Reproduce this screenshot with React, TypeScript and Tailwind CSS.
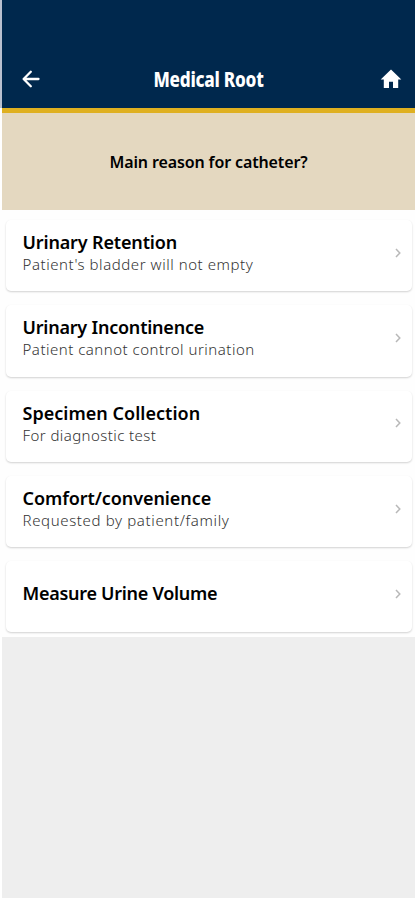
type Reason = { title: string; detail?: string; titleClass: string; detailClass?: string };

const reasons: Reason[] = [
  { title: 'Urinary Retention', detail: "Patient's bladder will not empty", titleClass: 'tracking-[-0.150px]', detailClass: 'tracking-[0.550px]' },
  { title: 'Urinary Incontinence', detail: 'Patient cannot control urination', titleClass: 'tracking-[-0.220px]', detailClass: 'tracking-[0.500px]' },
  { title: 'Specimen Collection', detail: 'For diagnostic test', titleClass: 'tracking-[0.030px]', detailClass: 'tracking-[0.420px]' },
  { title: 'Comfort/convenience', detail: 'Requested by patient/family', titleClass: 'tracking-[-0.080px]', detailClass: 'tracking-[0.640px]' },
  { title: 'Measure Urine Volume', titleClass: 'tracking-[-0.280px]' },
];

function BackIcon() {
  return (
    <svg width="20" height="18" viewBox="0 0 20 18" fill="none" stroke="white" strokeWidth="2.3" strokeLinecap="round" strokeLinejoin="round">
      <path d="M9.800 1.800 2.600 9l7.200 7.200M2.800 9H17.500" />
    </svg>
  );
}

function HomeIcon() {
  return (
    <svg width="22" height="20" viewBox="0 0 22 20" fill="white">
      <path d="M11 0.500 0.700 10.400H3.800V19H9V12.800H13V19H18.200V10.400H21.300Z" />
    </svg>
  );
}

function Chevron() {
  return (
    <svg width="6" height="10" viewBox="0 0 6 10" fill="none" stroke="#b8b8b8" strokeWidth="1.5">
      <path d="M1 1 4.800 5 1 9" />
    </svg>
  );
}

export default function App() {
  return (
    <div className="flex h-[900px] w-[415px] flex-col bg-white font-['Noto_Sans','Open_Sans',sans-serif] text-black">
      <header className="flex h-[108px] items-end border-l-2 border-[#b9c0ce] bg-[#00284d]">
        <div className="grid h-[58px] w-full grid-cols-[60px_1fr_60px] items-center">
          <div className="pl-[19px]"><BackIcon /></div>
          <h1 className="origin-center scale-x-[0.780] whitespace-nowrap pb-[2px] text-center text-[22px] font-extrabold leading-7 tracking-[-0.300px] text-white">Medical Root</h1>
          <div className="flex justify-end pr-[13px]"><HomeIcon /></div>
        </div>
      </header>
      <section className="ml-[2px] flex h-[102px] items-center justify-center border-t-[5px] border-[#dfb020] bg-[#e4d8c0]">
        <h2 className="whitespace-nowrap text-[16px] font-semibold leading-6 tracking-[-0.120px]">Main reason for catheter?</h2>
      </section>
      <main className="flex h-[427px] flex-col gap-[14px] bg-[#fefefe] pl-[6px] pr-[3px] pt-[10px]">
        {reasons.map((r) => (
          <button key={r.title} className="flex h-[71.300px] shrink-0 items-center justify-between rounded-[5px] bg-white pb-[6px] pl-[16.500px] pr-[11px] text-left shadow-[0_1px_2px_rgba(0,0,0,0.18)]">
            <span className={r.detail ? 'flex flex-col items-start pt-[1px]' : 'flex flex-col items-start pb-[2px]'}>
              <span className={`whitespace-nowrap text-[18px] font-semibold leading-[22px] ${r.titleClass}`}>{r.title}</span>
              {r.detail && <span className={`whitespace-nowrap text-[15px] font-light leading-[22px] text-[#333] ${r.detailClass}`}>{r.detail}</span>}
            </span>
            <Chevron />
          </button>
        ))}
      </main>
      <div className="ml-[2px] h-[261px] bg-[#eeeeee]" />
    </div>
  );
}
